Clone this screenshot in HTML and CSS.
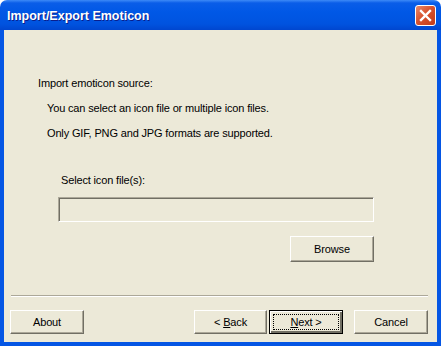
FILE: index.html
```html
<!DOCTYPE html>
<html lang="en">
<head>
    <meta charset="UTF-8">
    <title>Import/Export Emoticon</title>
    <link rel="stylesheet" href="styles.css">
</head>
<body>
    <div class="window">
        <div class="titlebar">
            <span class="title">Import/Export Emoticon</span>
            <button class="close" type="button" aria-label="Close">
                <svg width="13" height="13" viewBox="0 0 13 13">
                    <path d="M2 2 L11 11 M11 2 L2 11" stroke="#fff" stroke-width="2.4" stroke-linecap="square"/>
                </svg>
            </button>
        </div>
        <div class="dialog">
            <div class="content">
                <p class="heading">Import emoticon source:</p>
                <p class="info">You can select an icon file or multiple icon files.</p>
                <p class="info">Only GIF, PNG and JPG formats are supported.</p>

                <!-- file picker -->
                <div class="picker">
                    <label for="files">Select icon file(s):</label>
                    <input type="text" id="files" disabled>
                    <div class="picker-actions">
                        <button type="button" class="btn btn-wide">Browse</button>
                    </div>
                </div>
            </div>

            <div class="separator"></div>

            <div class="footer">
                <button type="button" class="btn">About</button>
                <div class="nav">
                    <button type="button" class="btn btn-back">&lt; <u>B</u>ack</button>
                    <button type="button" class="btn btn-default"><span class="focus"><u>N</u>ext &gt;</span></button>
                    <button type="button" class="btn btn-cancel">Cancel</button>
                </div>
            </div>
        </div>
    </div>
</body>
</html>
```

FILE: styles.css
```css
body {
    margin: 0;
    font-family: "Liberation Sans", Arial, sans-serif;
    font-size: 11px;
    letter-spacing: -0.15px;
    color: #000;
    background: #fff;
}

.window {
    width: 441px;
    height: 346px;
    display: flex;
    flex-direction: column;
}

.titlebar {
    height: 30px;
    flex-shrink: 0;
    display: flex;
    align-items: center;
    justify-content: space-between;
    padding: 0 5px 0 7px;
    box-sizing: border-box;
    border-radius: 7px 7px 0 0;
    background: linear-gradient(#3d8af7 0, #0a5de8 3px, #0058e6 40%, #0053df 80%, #0046cf 100%);
}

.title {
    color: #fff;
    font-weight: bold;
    font-size: 12.5px;
    letter-spacing: 0;
    text-shadow: 1px 1px 0 #0a1e8c;
    padding-top: 2px;
}

.close {
    width: 21px;
    height: 21px;
    padding: 0;
    margin-top: 1px;
    display: flex;
    align-items: center;
    justify-content: center;
    border: 1px solid #fff;
    border-radius: 3px;
    background: linear-gradient(135deg, #e88a6c 0, #d8532f 45%, #c23b18 100%);
}

.dialog {
    flex: 1;
    display: flex;
    flex-direction: column;
    background-color: #ece9d8;
    border: 4px solid #0556e4;
    border-top: none;
}

.content {
    padding: 47px 0 0 34px;
    height: 265px;
    box-sizing: border-box;
}

p {
    margin: 0;
    line-height: 13px;
}

.info {
    margin-top: 12px;
    margin-left: 9px;
}

.picker {
    margin-top: 34px;
    margin-left: 20px;
    width: 316px;
}

.picker label {
    display: block;
    line-height: 13px;
    margin-left: 3px;
}

.picker input {
    display: block;
    width: 316px;
    height: 25px;
    margin-top: 10px;
    box-sizing: border-box;
    background-color: #ece9d8;
    border: 1px solid;
    border-color: #aca899 #fff #fff #aca899;
    box-shadow: inset 1px 1px 0 #716f64;
}

.picker-actions {
    display: flex;
    justify-content: flex-end;
    margin-top: 14px;
}

.btn {
    width: 74px;
    height: 24px;
    padding: 0;
    font-family: inherit;
    font-size: 11px;
    letter-spacing: -0.15px;
    color: #000;
    background-color: #ece9d8;
    border: 1px solid;
    border-color: #fff #716f64 #716f64 #fff;
    box-shadow: inset -1px -1px 0 #aca899;
    box-sizing: border-box;
}

.btn-wide {
    width: 84px;
    height: 26px;
}

.btn u {
    text-decoration: underline;
}

.btn-default {
    border: 1px solid #000;
    box-shadow: inset 1px 1px 0 #fff, inset -2px -2px 0 #716f64;
    padding: 3px;
}

.focus {
    display: flex;
    align-items: center;
    justify-content: center;
    height: 100%;
    border: 1px dotted #000;
    box-sizing: border-box;
}

.separator {
    margin: 0 9px 0 7px;
    height: 0;
    border-top: 1px solid #aca899;
    border-bottom: 1px solid #fff;
}

.footer {
    display: flex;
    justify-content: space-between;
    padding: 13px 9px 0 6px;
}

.nav {
    display: flex;
}

.btn-back {
    width: 73px;
}

.btn-default {
    margin-left: 2px;
}

.btn-cancel {
    margin-left: 11px;
}
```
